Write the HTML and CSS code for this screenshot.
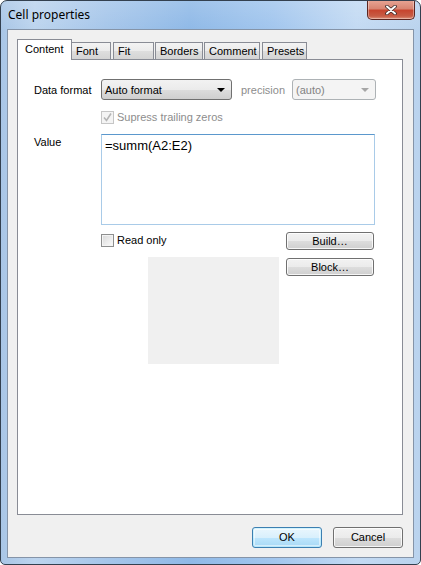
FILE: index.html
```html
<!DOCTYPE html>
<html>
<head>
<meta charset="utf-8">
<title>Cell properties</title>
<link rel="stylesheet" href="styles.css">
</head>
<body>
<div class="window">
  <div class="titlebar">
    <div class="title">Cell properties</div>
    <div class="close">
      <svg width="14" height="10" viewBox="0 0 14 10">
        <path d="M3 1.5 L11 8.5 M11 1.5 L3 8.5" stroke="#3b2a28" stroke-width="3.6" stroke-linecap="round" fill="none"/>
        <path d="M3 1.5 L11 8.5 M11 1.5 L3 8.5" stroke="#ffffff" stroke-width="2" stroke-linecap="round" fill="none"/>
      </svg>
    </div>
  </div>
  <div class="client">
    <div class="tabctl">
      <div class="tabs">
        <div class="tab tab-active">Content</div>
        <div class="tab tab-font">Font</div>
        <div class="tab tab-fit">Fit</div>
        <div class="tab tab-borders">Borders</div>
        <div class="tab tab-comment">Comment</div>
        <div class="tab tab-presets">Presets</div>
      </div>
      <div class="panel">
        <div class="row row-format">
          <div class="label">Data format</div>
          <div class="combo combo-main">
            <span class="combo-text">Auto format</span>
            <span class="arrow"></span>
          </div>
          <div class="label-dim">precision</div>
          <div class="combo combo-disabled">
            <span class="combo-text">(auto)</span>
            <span class="arrow arrow-dim"></span>
          </div>
        </div>
        <div class="row row-check">
          <div class="label"></div>
          <div class="check check-disabled">
            <svg width="11" height="11" viewBox="0 0 11 11"><path d="M2 5.5 L4.5 8.5 L9 1.5" stroke="#b5b5b5" stroke-width="1.6" fill="none"/></svg>
          </div>
          <span class="check-label dim">Supress trailing zeros</span>
        </div>
        <div class="row row-value">
          <div class="label label-top">Value</div>
          <div class="textbox">=summ(A2:E2)</div>
        </div>
        <div class="row row-lower">
          <div class="label"></div>
          <div class="lower-left">
            <div class="readonly">
              <div class="check"></div>
              <span class="check-label">Read only</span>
            </div>
            <div class="preview"></div>
          </div>
          <div class="lower-right">
            <div class="btn btn-small">Build…</div>
            <div class="btn btn-small">Block…</div>
          </div>
        </div>
      </div>
    </div>
    <div class="buttons">
      <div class="btn btn-default">OK</div>
      <div class="btn">Cancel</div>
    </div>
  </div>
</div>
</body>
</html>
```

FILE: styles.css
```css
html, body {
  margin: 0;
  padding: 0;
  background: #ffffff;
}

.window {
  width: 421px;
  height: 565px;
  box-sizing: border-box;
  border: 1px solid #33404f;
  border-radius: 7px 7px 5px 5px;
  display: flex;
  flex-direction: column;
  background:
    linear-gradient(180deg, rgba(255,255,255,0.15) 0%, rgba(255,255,255,0) 30px),
    linear-gradient(90deg, #a9c6e6 0%, #bcd4ee 8%, #a6c6ea 25%, #8fb9e7 45%, #a2c6ee 65%, #c3daf3 85%, #bad3ee 100%);
  overflow: hidden;
}

.titlebar {
  height: 28px;
  flex: none;
  display: flex;
  align-items: flex-start;
}

.title {
  flex: 1;
  padding: 6px 0 0 7px;
  font-family: "Noto Sans", "Liberation Sans", sans-serif;
  font-size: 12px;
  color: #000000;
  line-height: 16px;
}

.close {
  width: 48px;
  height: 20px;
  margin: -1px 5px 0 0;
  box-sizing: border-box;
  border: 1px solid #5b2520;
  border-top: none;
  border-radius: 0 0 5px 5px;
  background: linear-gradient(180deg, #e8a696 0%, #d88572 45%, #c7452f 55%, #c75c45 85%, #e0927b 100%);
  box-shadow: inset 0 0 0 1px rgba(255,255,255,0.35);
  display: flex;
  align-items: center;
  justify-content: center;
}

.close svg { display: block; }

.client {
  flex: 1;
  margin: 0 6px 6px 6px;
  border: 1px solid #8594a8;
  background: #f0f0f0;
  padding: 9px 10px 9px 9px;
  display: flex;
  flex-direction: column;
  font-family: "Liberation Sans", Arial, sans-serif;
  font-size: 11px;
  color: #000000;
}

.tabctl {
  flex: 1;
  display: flex;
  flex-direction: column;
}

.tabs {
  height: 20px;
  display: flex;
  align-items: flex-end;
}

.tab {
  box-sizing: border-box;
  height: 17px;
  padding: 0 0 0 4px;
  border: 1px solid #898c95;
  border-bottom: none;
  background: linear-gradient(180deg, #f3f3f3 0%, #ebebeb 50%, #dedede 51%, #d4d4d4 100%);
  line-height: 16px;
  white-space: nowrap;
  flex: none;
}

.tab-font { width: 39px; border-left: none; }
.tab-fit { width: 41px; margin-left: 2px; }
.tab-borders { width: 48px; margin-left: 1px; }
.tab-comment { width: 56px; margin-left: 1px; }
.tab-presets { width: 45px; margin-left: 2px; }

.tab-active {
  height: 21px;
  width: 55px;
  margin-bottom: -1px;
  padding: 0 0 0 7px;
  background: #ffffff;
  position: relative;
  z-index: 1;
  line-height: 18px;
}

.panel {
  flex: 1;
  border: 1px solid #898c95;
  background: #ffffff;
  padding: 19px 26px 0 16px;
}

.row {
  display: flex;
}

.label {
  width: 67px;
  flex: none;
}

.row-format {
  height: 21px;
  align-items: center;
}

.combo {
  box-sizing: border-box;
  height: 21px;
  border: 1px solid #707070;
  border-radius: 3px;
  display: flex;
  align-items: center;
  padding: 0 0 0 3px;
}

.combo-main {
  width: 131px;
  background: linear-gradient(180deg, #f2f2f2 0%, #ebebeb 50%, #dddddd 51%, #cfcfcf 100%);
}

.combo-text { flex: 1; }

.arrow {
  width: 0;
  height: 0;
  border-left: 4px solid transparent;
  border-right: 4px solid transparent;
  border-top: 4px solid #000000;
  margin-right: 6px;
}

.arrow-dim { border-top-color: #a6a6a6; }

.label-dim {
  box-sizing: border-box;
  width: 60px;
  padding-left: 9px;
  color: #8d8d8d;
}

.combo-disabled {
  width: 84px;
  border-color: #adb2b5;
  background: #f4f4f4;
  color: #838383;
}

.row-check {
  margin-top: 11px;
  height: 13px;
  align-items: center;
}

.check {
  box-sizing: border-box;
  width: 13px;
  height: 13px;
  flex: none;
  border: 1px solid #8e8f8f;
  background: linear-gradient(135deg, #d8d8d8 0%, #eeeeee 60%, #fbfbfb 100%);
  box-shadow: inset 0 0 0 1px #f4f4f4;
  display: flex;
  align-items: center;
  justify-content: center;
}

.check svg { display: block; }

.check-disabled {
  border-color: #c6c6c6;
  background: #f4f4f4;
  box-shadow: none;
}

.check-label {
  margin-left: 3px;
  line-height: 13px;
}

.dim { color: #8d8d8d; }

.row-value {
  margin-top: 10px;
}

.label-top {
  padding-top: 2px;
}

.textbox {
  box-sizing: border-box;
  width: 274px;
  height: 91px;
  border: 1px solid #a9cbe8;
  border-top-color: #5b98cd;
  padding: 3px 0 0 3px;
  font-size: 13px;
  line-height: 16px;
}

.row-lower {
  margin-top: 7px;
}

.lower-left {
  width: 185px;
  flex: none;
  display: flex;
  flex-direction: column;
}

.readonly {
  height: 18px;
  display: flex;
  align-items: center;
  padding-bottom: 2px;
  box-sizing: border-box;
}

.preview {
  margin: 7px 0 0 47px;
  width: 131px;
  height: 107px;
  background: #f0f0f0;
}

.lower-right {
  display: flex;
  flex-direction: column;
  gap: 8px;
}

.btn {
  box-sizing: border-box;
  width: 70px;
  height: 21px;
  border: 1px solid #707070;
  border-radius: 3px;
  background: linear-gradient(180deg, #f2f2f2 0%, #ebebeb 50%, #dddddd 51%, #cfcfcf 100%);
  box-shadow: inset 0 0 0 1px rgba(255,255,255,0.8);
  display: flex;
  align-items: center;
  justify-content: center;
  line-height: 13px;
}

.btn-small {
  width: 88px;
  height: 18px;
}

.buttons {
  margin-top: 12px;
  display: flex;
  justify-content: flex-end;
  gap: 11px;
}

.btn-default {
  border-color: #3c7fb1;
  background: linear-gradient(180deg, #eaf6fd 0%, #d9f0fc 50%, #bee6fd 51%, #a7d9f5 100%);
  box-shadow: inset 0 0 0 1px #48d7ff33, inset 0 0 0 2px rgba(255,255,255,0.5);
}
```
